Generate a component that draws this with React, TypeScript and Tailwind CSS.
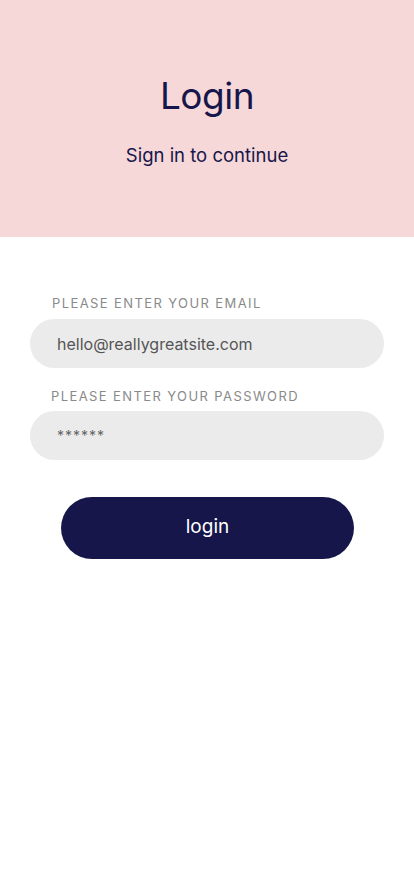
export default function App() {
  const font = { fontFamily: '"Inter", "Noto Sans", sans-serif' };
  return (
    <div className="min-h-[896px] w-[414px] bg-white" style={font}>
      <div className="flex h-[237px] flex-col items-center bg-[#f7d8d8] pt-[73px]">
        <h1 className="text-[37px] leading-[46px] font-normal text-[#16164a] tracking-[-0.5px]">Login</h1>
        <p className="mt-[24px] text-[18.5px] leading-[24px] text-[#16164a]">Sign in to continue</p>
      </div>
      <div className="flex flex-col px-[30px] pt-[58px]">
        <label className="ml-[22px] text-[13px] leading-[16px] tracking-[1.4px] text-[#8a8a8a]">PLEASE ENTER YOUR EMAIL</label>
        <div className="mt-[8px] flex h-[49px] w-[354px] items-center rounded-full bg-[#ebebeb] pl-[27px] text-[16px] text-[#555555]">
          hello@reallygreatsite.com
        </div>
        <label className="mt-[20px] ml-[21px] text-[13px] leading-[16px] tracking-[1.4px] text-[#8a8a8a]">PLEASE ENTER YOUR PASSWORD</label>
        <div className="mt-[7px] flex h-[49px] w-[354px] items-center rounded-full bg-[#ebebeb] pl-[27px] text-[14px] tracking-[1px] text-[#666666]">
          ******
        </div>
        <button className="mt-[37px] ml-[31px] flex h-[62px] w-[293px] items-center justify-center rounded-full bg-[#16164a] pb-[2px] text-[19px] text-white">
          login
        </button>
      </div>
    </div>
  );
}
